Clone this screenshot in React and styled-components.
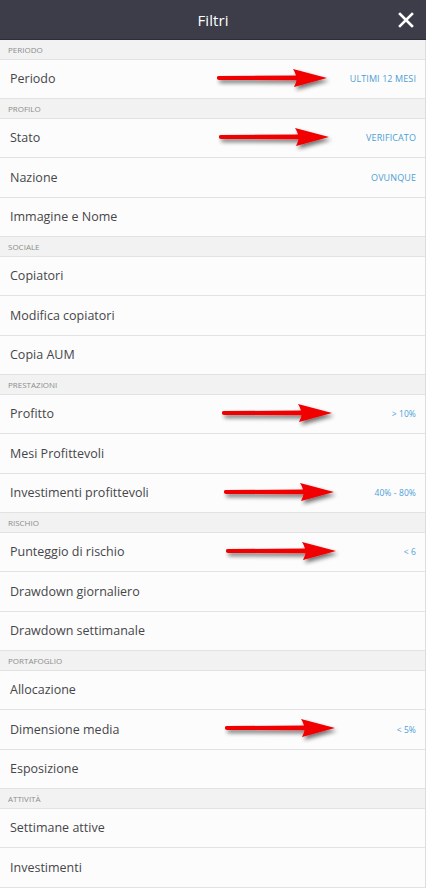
import styled, { createGlobalStyle } from "styled-components"

const GlobalStyle = createGlobalStyle`
  * { box-sizing: border-box; }
  body {
    margin: 0;
    background: #fcfcfc;
    font-family: "Open Sans", "Noto Sans", sans-serif;
  }
`

const Panel = styled.div`
  width: 426px;
  background: #fcfcfc;
`

const Header = styled.header`
  height: 40px;
  background-color: #3c3d48;
  border-bottom: 1px solid #2c2d35;
  display: flex;
  align-items: center;
  justify-content: center;
  position: relative;
  color: #ffffff;
`

const Title = styled.h1`
  margin: 0;
  font-size: 15px;
  font-weight: 400;
  letter-spacing: 0.1px;
`

const Close = styled.button`
  position: absolute;
  right: 12px;
  top: 12px;
  width: 16px;
  height: 16px;
  padding: 0;
  border: 0;
  background: none;
  cursor: pointer;
  display: flex;
`

const List = styled.div`
  border-right: 1px solid #dddddd;
`

const Section = styled.div`
  height: 19.5px;
  background-color: #f2f2f2;
  border-bottom: 1px solid #e2e2e2;
  display: flex;
  align-items: center;
  padding-left: 8px;
  font-size: 8px;
  color: #8c8c8c;
  text-transform: uppercase;
`

const Row = styled.div`
  height: 39.5px;
  border-bottom: 1px solid #e2e2e2;
  display: flex;
  align-items: center;
  justify-content: space-between;
  padding: 0 9px 0 10px;
  position: relative;
  background: #fcfcfc;
`

const Label = styled.span`
  font-size: 12.5px;
  color: #46464a;
`

const Value = styled.span`
  font-size: ${(p) => (p.$upper ? "9px" : "8.5px")};
  color: #4d9fd6;
  text-transform: uppercase;
  letter-spacing: 0.1px;
`

const ArrowMark = styled.svg`
  position: absolute;
  top: 50%;
  left: ${(p) => p.$left}px;
  width: 120px;
  height: 28px;
  margin-top: -14px;
  pointer-events: none;
`

const Arrow = ({ left }) => (
  <ArrowMark $left={left} viewBox="0 0 120 28">
    <defs>
      <filter id={`sh${left}`} x="-10%" y="-50%" width="130%" height="220%">
        <feGaussianBlur in="SourceAlpha" stdDeviation="2" />
        <feOffset dx="2" dy="3" result="b" />
        <feComponentTransfer>
          <feFuncA type="linear" slope="0.55" />
        </feComponentTransfer>
        <feMerge>
          <feMergeNode />
          <feMergeNode in="SourceGraphic" />
        </feMerge>
      </filter>
    </defs>
    <path
      filter={`url(#sh${left})`}
      fill="#f00000"
      d="M1 12.2 Q1 11 3 11 L80 10.6 Q79 7 77 4 L111 13 L78 22 Q80 18 80.5 15.2 L3 15 Q1 15 1 13.6 Z"
    />
  </ArrowMark>
)

const XIcon = () => (
  <svg width="16" height="16" viewBox="0 0 16 16">
    <path d="M2 2 L14 14 M14 2 L2 14" stroke="#ffffff" strokeWidth="2.6" strokeLinecap="square" />
  </svg>
)

const sections = [
  {
    title: "Periodo",
    rows: [{ label: "Periodo", value: "Ultimi 12 mesi", arrow: 216 }],
  },
  {
    title: "Profilo",
    rows: [
      { label: "Stato", value: "Verificato", arrow: 218 },
      { label: "Nazione", value: "Ovunque" },
      { label: "Immagine e Nome" },
    ],
  },
  {
    title: "Sociale",
    rows: [{ label: "Copiatori" }, { label: "Modifica copiatori" }, { label: "Copia AUM" }],
  },
  {
    title: "Prestazioni",
    rows: [
      { label: "Profitto", value: "> 10%", arrow: 221 },
      { label: "Mesi Profittevoli" },
      { label: "Investimenti profittevoli", value: "40% - 80%", arrow: 223 },
    ],
  },
  {
    title: "Rischio",
    rows: [
      { label: "Punteggio di rischio", value: "< 6", arrow: 225 },
      { label: "Drawdown giornaliero" },
      { label: "Drawdown settimanale" },
    ],
  },
  {
    title: "Portafoglio",
    rows: [
      { label: "Allocazione" },
      { label: "Dimensione media", value: "< 5%", arrow: 224 },
      { label: "Esposizione" },
    ],
  },
  {
    title: "Attività",
    rows: [{ label: "Settimane attive" }, { label: "Investimenti" }],
  },
]

const App = () => {
  return (
    <Panel>
      <GlobalStyle />
      <Header>
        <Title>Filtri</Title>
        <Close aria-label="Chiudi">
          <XIcon />
        </Close>
      </Header>
      <List>
        {sections.map((s) => (
          <div key={s.title}>
            <Section>{s.title}</Section>
            {s.rows.map((r) => (
              <Row key={r.label}>
                <Label>{r.label}</Label>
                {r.value && <Value $upper={/[A-Z]/i.test(r.value)}>{r.value}</Value>}
                {r.arrow && <Arrow left={r.arrow} />}
              </Row>
            ))}
          </div>
        ))}
      </List>
    </Panel>
  )
}

export default App
